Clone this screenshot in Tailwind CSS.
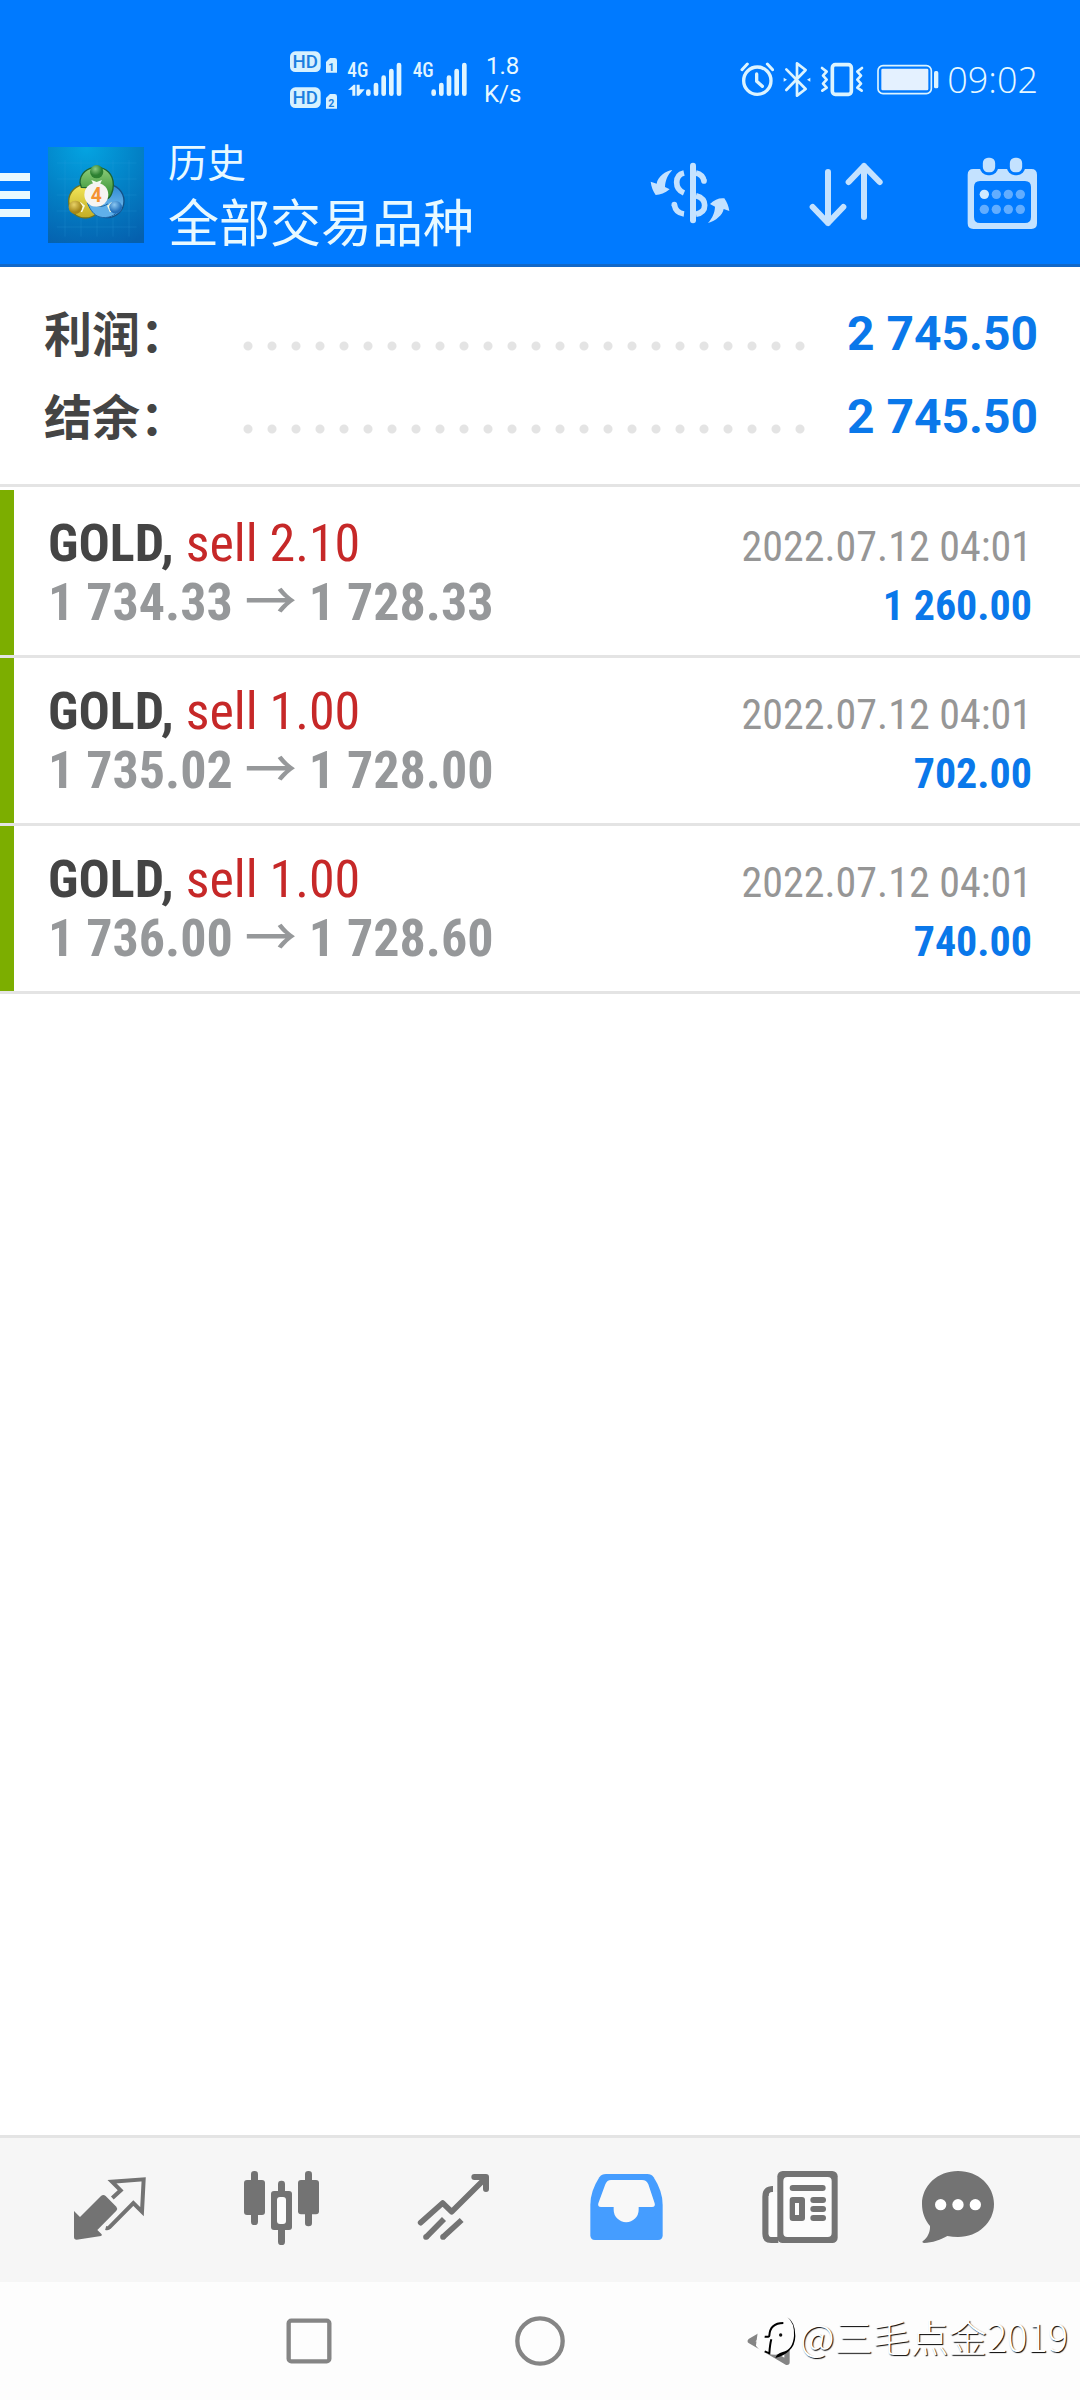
<!DOCTYPE html>
<html lang="zh-CN">
<head>
<meta charset="utf-8">
<meta name="viewport" content="width=device-width, initial-scale=1">
<title>历史 - 全部交易品种</title>
<script src="https://cdn.jsdelivr.net/npm/@tailwindcss/browser@4"></script>
</head>
<body class="flex min-h-screen flex-col bg-white font-['Roboto','Noto_Sans_CJK_SC',sans-serif]">

<header class="border-b-3 border-[#1268c8] bg-[#007aff] text-[#e8f9ff]">
  <!-- system status bar -->
  <div class="flex h-[126px] items-center justify-between pt-[34px] pr-[42px] pl-[288px]">
    <div class="flex items-center">
      <svg class="h-[60px] w-[50px]" viewBox="54 30 150 180" fill="#d6f1ff" role="img" aria-label="HD 1, HD 2">
        <rect x="60" y="34" width="92" height="62" rx="16"/>
        <rect x="60" y="142" width="92" height="62" rx="16"/>
        <path d="M168 66l12-12h14q7 0 7 7v37h-33z"/>
        <path d="M168 174l12-12h14q7 0 7 7v37h-33z"/>
        <g fill="#1b7fe0" font-family="Roboto, sans-serif" font-weight="500" text-anchor="middle">
          <text x="106" y="85" font-size="56">HD</text>
          <text x="106" y="193" font-size="56">HD</text>
          <text x="184" y="92" font-size="32" font-weight="700">1</text>
          <text x="184" y="200" font-size="32" font-weight="700">2</text>
        </g>
      </svg>
      <svg class="ml-2 h-[40px] w-[57px]" viewBox="231 60 171 120" fill="#e0f5ff" role="img" aria-label="4G">
        <text x="235" y="112" font-size="58" font-weight="500" font-family="Roboto Condensed, sans-serif">4G</text>
        <rect x="291" y="148" width="14" height="20" rx="7"/><rect x="314" y="128" width="14" height="40" rx="7"/><rect x="337" y="106" width="14" height="62" rx="7"/><rect x="360" y="86" width="14" height="82" rx="7"/><rect x="383" y="68" width="14" height="100" rx="7"/>
        <path d="M237 150l17-16h5v33h-9v-18zM263 134h9v14h15l-17 19h-7z"/>
      </svg>
      <svg class="ml-2 h-[40px] w-[57px]" viewBox="425 60 171 120" fill="#e0f5ff" role="img" aria-label="4G">
        <text x="430" y="112" font-size="58" font-weight="500" font-family="Roboto Condensed, sans-serif">4G</text>
        <rect x="486" y="148" width="14" height="20" rx="7"/><rect x="509" y="128" width="14" height="40" rx="7"/><rect x="532" y="106" width="14" height="62" rx="7"/><rect x="555" y="86" width="14" height="82" rx="7"/><rect x="578" y="68" width="14" height="100" rx="7"/>
      </svg>
      <div class="ml-4 text-center text-[24px] leading-7">1.8<br>K/s</div>
    </div>
    <div class="flex items-center">
      <svg class="h-[36px] w-[34px]" viewBox="61 66 102 108" fill="none" stroke="#dcf4ff" role="img" aria-label="闹钟">
        <circle cx="113" cy="122" r="41" stroke-width="10"/><path d="M111 102v22l17 15" stroke-width="10" stroke-linecap="round" stroke-linejoin="round"/><path d="M67 89l16-17M159 89l-16-17" stroke-width="9" stroke-linecap="round"/>
      </svg>
      <svg class="ml-[9px] h-[36px] w-[28px]" viewBox="190 66 84 108" fill="none" stroke="#dcf4ff" role="img" aria-label="蓝牙">
        <path d="M200 88l58 59-26 20V70l26 20-58 60" stroke-width="8" stroke-linecap="round" stroke-linejoin="round"/><path d="M192 113l10 6-10 6zM272 113l-10 6 10 6z" fill="#dcf4ff" stroke="none"/>
      </svg>
      <svg class="ml-[9px] h-[36px] w-[44px]" viewBox="300 66 132 108" fill="none" stroke="#dcf4ff" role="img" aria-label="振动">
        <rect x="337" y="74" width="57" height="89" rx="9" stroke-width="11"/>
        <path d="M306 84l14 11-11 12 11 12-11 12 11 12-13 9M426 84l-14 11 11 12-11 12 11 12-11 12 13 9" stroke-width="8" stroke-linecap="round" stroke-linejoin="round"/>
      </svg>
      <svg class="ml-[13px] h-[36px] w-[64px]" viewBox="474 66 192 108" role="img" aria-label="电池">
        <rect x="477" y="77" width="160" height="84" rx="15" fill="none" stroke="#dcf4ff" stroke-width="5"/><rect x="487" y="86" width="141" height="65" rx="4" fill="#e4f1ff"/><rect x="645" y="93" width="13" height="52" rx="5" fill="#dcf4ff"/>
      </svg>
      <time class="ml-1.5 font-['Open_Sans'] text-[36px] leading-10 font-light">09:02</time>
    </div>
  </div>

  <!-- toolbar -->
  <div class="flex h-[138px] items-center pr-[30px]">
    <button type="button" aria-label="菜单" class="flex w-[30px] flex-col gap-[10px]">
      <span class="h-2 bg-[#e8f9ff]"></span><span class="h-2 bg-[#e8f9ff]"></span><span class="h-2 bg-[#e8f9ff]"></span>
    </button>
    <svg class="ml-[18px] size-24" viewBox="144 51 288 288" role="img" aria-label="MetaTrader 4">
      <defs>
        <radialGradient id="sky" cx=".4" cy="0" r="1.1"><stop offset="0" stop-color="#04a4e2"/><stop offset=".5" stop-color="#0381c6"/><stop offset="1" stop-color="#0560ae"/></radialGradient>
        <linearGradient id="green" x1="0" y1="0" x2="0" y2="1"><stop offset="0" stop-color="#8fce7c"/><stop offset="1" stop-color="#2d8c2c"/></linearGradient>
        <linearGradient id="gold" x1="0" y1="0" x2="0" y2="1"><stop offset="0" stop-color="#f3e75a"/><stop offset="1" stop-color="#c2ac24"/></linearGradient>
        <linearGradient id="azure" x1="0" y1="0" x2="0" y2="1"><stop offset="0" stop-color="#2b86d2"/><stop offset="1" stop-color="#86cbf5"/></linearGradient>
        <radialGradient id="gball" cx=".4" cy=".3" r=".8"><stop offset="0" stop-color="#8ccb83"/><stop offset=".6" stop-color="#2c8031"/></radialGradient>
        <radialGradient id="yball" cx=".4" cy=".3" r=".8"><stop offset="0" stop-color="#e8d267"/><stop offset=".7" stop-color="#a58618"/></radialGradient>
        <radialGradient id="bball" cx=".4" cy=".3" r=".8"><stop offset="0" stop-color="#8cc8f2"/><stop offset=".7" stop-color="#2270bb"/></radialGradient>
      </defs>
      <rect x="144" y="51" width="288" height="288" fill="url(#sky)"/>
      <path d="M195 90v230M243 90v230M291 90v230M339 90v230M387 90v230M170 99h240M170 147h240M170 195h240M170 243h240M170 291h240" stroke="#35a5e2" stroke-opacity=".3" stroke-width="2"/>
      <circle cx="322" cy="213" r="50" fill="url(#azure)" stroke="#135187" stroke-width="4"/>
      <circle cx="256" cy="214" r="50" fill="url(#gold)" stroke="#6f7420" stroke-width="4"/>
      <path d="M240 158c0-28 22-46 50-46s50 20 50 52c0 20-9 40-18 42l-30-32-48-2z" fill="url(#green)" stroke="#1d6430" stroke-width="4"/>
      <path d="M262 218c18 12 46 16 60 4l32 22c-14 18-42 24-62 14-14-7-24-24-30-40z" fill="#5fb0ea" stroke="#1b66a8" stroke-width="3"/>
      <path d="M274 150l16 6 16-6-10 20h-12z" fill="#f2fbef"/>
      <path d="M240 218l12 10-8 18M336 218l-12 10 8 18" fill="none" stroke="#f7fae0" stroke-width="5"/>
      <circle cx="290" cy="125" r="20" fill="url(#gball)"/><circle cx="226" cy="232" r="20" fill="url(#yball)"/><circle cx="347" cy="232" r="19" fill="url(#bball)"/>
      <circle cx="289" cy="194" r="36" fill="#f5f4f2"/>
      <text x="289" y="215" text-anchor="middle" font-size="58" font-weight="700" fill="#f49232" font-family="Roboto, sans-serif">4</text>
    </svg>
    <div class="ml-6 flex-1 pt-1.5 whitespace-nowrap">
      <p class="text-[39px] leading-[54px]">历史</p>
      <h1 class="text-[51px] leading-[68px]">全部交易品种</h1>
    </div>
    <div class="flex gap-[60px]">
      <button type="button" aria-label="交易品种" class="size-24">
        <svg viewBox="66 21 288 288" fill="none" stroke="#c4e2ff" stroke-width="17">
          <path d="M219 77v164" stroke-linecap="round" stroke-width="18"/>
          <path d="M192 99q-22 5-22 28t22 32M163 194q4 25 29 28M228 99q20 4 24 24M228 167q26 7 26 29t-26 27" />
          <circle cx="163" cy="194" r="8.500" fill="#c4e2ff" stroke="none"/><circle cx="252" cy="123" r="8.500" fill="#c4e2ff" stroke="none"/>
          <path d="M157 90c-20 2-44 20-47 41l-18-6c2 16 7 28 15 40 14 0 28-5 42-17l-14-7c1-20 8-36 22-51zM264 249c24-7 44-24 47-42l17 6c-2-14-7-26-15-38-15-2-30 4-43 17l15 8c-1 20-8 34-21 49z" fill="#c4e2ff" stroke="none"/>
        </svg>
      </button>
      <button type="button" aria-label="排序" class="size-24">
        <svg viewBox="534 21 288 288" fill="none" stroke="#c4e2ff" stroke-width="18" stroke-linecap="round" stroke-linejoin="round"><path d="M624 96v153M578 201l46 48 46-48M732 231V78M686 126l46-48 47 48"/></svg>
      </button>
      <button type="button" aria-label="日历" class="size-24">
        <svg viewBox="1002 21 288 288" fill="#c4e2ff">
          <path fill-rule="evenodd" d="M1060 87h174q17 0 17 17v146q0 17-17 17h-174q-17 0-17-17V104q0-17 17-17zM1080 123q-18 0-18 18v90q0 18 18 18h135q18 0 18-18v-90q0-18-18-18z"/>
          <g stroke="#007aff" stroke-width="9"><rect x="1084" y="49" width="46" height="52" rx="20"/><rect x="1165" y="49" width="46" height="52" rx="20"/></g>
          <circle cx="1093" cy="163" r="14" fill="#cfe9ff"/>
          <g fill="#62adff"><circle cx="1129" cy="163" r="14"/><circle cx="1165" cy="163" r="14"/><circle cx="1201" cy="163" r="14"/><circle cx="1093" cy="208" r="14"/><circle cx="1129" cy="208" r="14"/><circle cx="1165" cy="208" r="14"/><circle cx="1201" cy="208" r="14"/></g>
        </svg>
      </button>
    </div>
  </div>
</header>

<main class="flex-1">
  <dl class="border-b-3 border-[#e4e4e4] pt-[25px] pr-[42px] pb-[26px] pl-11 text-[48px] font-bold">
    <div class="flex items-center">
      <dt class="w-48 pt-1 leading-[79px] text-[#444]">利润：</dt>
      <dd class="flex flex-1 items-center leading-[83px] text-[#0a78ea]">
        <span class="mt-6 h-6 flex-1 bg-[radial-gradient(circle,#e4e4e4_4px,transparent_5px)] bg-[length:24px_24px]"></span>
        <span class="w-[228px] text-right">2 745.50</span>
      </dd>
    </div>
    <div class="flex items-center">
      <dt class="w-48 pt-1 leading-[79px] text-[#444]">结余：</dt>
      <dd class="flex flex-1 items-center leading-[83px] text-[#0a78ea]">
        <span class="mt-6 h-6 flex-1 bg-[radial-gradient(circle,#e4e4e4_4px,transparent_5px)] bg-[length:24px_24px]"></span>
        <span class="w-[228px] text-right">2 745.50</span>
      </dd>
    </div>
  </dl>

  <ul class="mt-[3px] font-['Roboto_Condensed','Noto_Sans_CJK_SC',sans-serif]">
    <li class="border-b-3 border-[#e4e4e4]">
      <div class="flex items-baseline justify-between border-l-14 border-[#7cae00] pt-6 pr-12 pb-5 pl-[34px] leading-[59px]">
        <div class="text-[52px]">
          <p><b class="text-[#444]">GOLD,</b> <span class="text-[#c62828]">sell 2.10</span></p>
          <p class="font-bold text-[#96989a]">1 734.33 <span class="font-medium">→</span> 1 728.33</p>
        </div>
        <div class="text-right text-[42px]">
          <p class="text-[#969696]">2022.07.12 04:01</p>
          <p class="font-bold text-[#0a78ea]">1 260.00</p>
        </div>
      </div>
    </li>
    <li class="border-b-3 border-[#e4e4e4]">
      <div class="flex items-baseline justify-between border-l-14 border-[#7cae00] pt-6 pr-12 pb-5 pl-[34px] leading-[59px]">
        <div class="text-[52px]">
          <p><b class="text-[#444]">GOLD,</b> <span class="text-[#c62828]">sell 1.00</span></p>
          <p class="font-bold text-[#96989a]">1 735.02 <span class="font-medium">→</span> 1 728.00</p>
        </div>
        <div class="text-right text-[42px]">
          <p class="text-[#969696]">2022.07.12 04:01</p>
          <p class="font-bold text-[#0a78ea]">702.00</p>
        </div>
      </div>
    </li>
    <li class="border-b-3 border-[#e4e4e4]">
      <div class="flex items-baseline justify-between border-l-14 border-[#7cae00] pt-6 pr-12 pb-5 pl-[34px] leading-[59px]">
        <div class="text-[52px]">
          <p><b class="text-[#444]">GOLD,</b> <span class="text-[#c62828]">sell 1.00</span></p>
          <p class="font-bold text-[#96989a]">1 736.00 <span class="font-medium">→</span> 1 728.60</p>
        </div>
        <div class="text-right text-[42px]">
          <p class="text-[#969696]">2022.07.12 04:01</p>
          <p class="font-bold text-[#0a78ea]">740.00</p>
        </div>
      </div>
    </li>
  </ul>
</main>

<!-- section tabs -->
<nav class="grid h-[147px] grid-cols-6 items-center justify-items-center border-t-3 border-[#e4e4e4] bg-[#f6f6f6] px-6">
  <a href="#quotes" aria-label="行情"><svg class="size-24" viewBox="66 126 288 288" fill="#737373">
    <path d="M102 273l18 18 63-63q7-6 14 0l32 32q5 6 0 12l-57 58 13 13q2 4-2 5l-73 11q-8 0-8-8z"/>
    <path d="M217 234l25-23-26-26 95-7-5 97-26-26-72 73q-4 4-11 2" fill="none" stroke="#737373" stroke-width="12"/>
  </svg></a>
  <a href="#charts" aria-label="图表"><svg class="size-24" viewBox="582 126 288 288" fill="#737373">
    <rect x="633" y="153" width="21" height="162" rx="10"/><rect x="612" y="180" width="63" height="105" rx="9"/>
    <rect x="795" y="153" width="21" height="166" rx="10"/><rect x="774" y="180" width="63" height="103" rx="9"/>
    <rect x="714" y="182" width="21" height="50" rx="10"/><rect x="714" y="310" width="21" height="65" rx="10"/>
    <rect x="693" y="213" width="63" height="117" rx="9"/><rect x="711" y="231" width="27" height="81" rx="9" fill="#fcfcfc"/>
  </svg></a>
  <a href="#trade" aria-label="交易"><svg class="size-24" viewBox="1098 126 288 288" fill="none" stroke="#737373" stroke-width="17">
    <path d="M1142 308l66-59 27 26 102-101" stroke-linecap="round" stroke-linejoin="round"/><path d="M1303 171h35v36" stroke-linecap="round" stroke-linejoin="round" stroke-width="18"/>
    <path d="M1158 352l54-55M1208 352l57-52"/><circle cx="1158" cy="351" r="8.500" fill="#737373" stroke="none"/><circle cx="1209" cy="351" r="8.500" fill="#737373" stroke="none"/>
  </svg></a>
  <a href="#history" aria-label="历史" aria-current="page"><svg class="size-24" viewBox="114 126 288 288">
    <path fill="#459dff" d="M198 162h124q12 0 19 10 27 42 27 82v92q0 14-14 14H165q-14 0-14-14v-92q0-40 27-82 7-10 20-10z"/>
    <path fill="#f8f8f8" d="M213 180h93q14 0 19 13l19 57q3 11-8 11h-40v8a37 37 0 0 1-75 0v-8h-38q-11 0-8-11l21-57q5-13 17-13z"/>
  </svg></a>
  <a href="#news" aria-label="新闻"><svg class="size-24" viewBox="630 126 288 288" fill="#737373">
    <path d="M699 198v18q-13-2-13 12v113q0 10 13 10h16v18h-22q-26 0-26-28V230q0-32 32-32z"/><path d="M686 216h26v126q0 9-8 9h-9q-9 0-9-9z" fill="#fcfcfc"/><path d="M699 198v18q-13-2-13 12l-8 0v-20z"/>
    <rect x="712" y="153" width="181" height="216" rx="16"/><rect x="730" y="171" width="145" height="180" rx="12" fill="#fcfcfc"/>
    <rect x="749" y="195" width="108" height="18" rx="9"/><rect x="749" y="231" width="46" height="72" rx="9"/><rect x="765" y="249" width="12" height="36" fill="#fcfcfc"/>
    <rect x="811" y="231" width="47" height="18" rx="9"/><rect x="811" y="258" width="47" height="18" rx="9"/><rect x="811" y="285" width="47" height="18" rx="9"/>
  </svg></a>
  <a href="#messages" aria-label="消息"><svg class="size-24" viewBox="1146 126 288 288">
    <path fill="#737373" d="M1254 153c61 0 108 44 108 99s-47 99-108 99q-16 0-32-3c-18 10-46 21-70 21q-8-1-3-6c14-10 22-28 21-45-15-17-24-41-24-66 0-55 47-99 108-99z"/>
    <g fill="#fff"><circle cx="1202" cy="254" r="17"/><circle cx="1254" cy="254" r="17"/><circle cx="1306" cy="254" r="17"/></g>
  </svg></a>
</nav>

<!-- system navigation -->
<footer class="relative flex h-[118px] items-center justify-center gap-[183px] bg-[#fdfdfd]">
  <button type="button" aria-label="最近任务" class="size-12"><svg viewBox="0 0 144 144" fill="none" stroke="#858585" stroke-width="13"><rect x="11" y="11" width="122" height="122" rx="8"/></svg></button>
  <button type="button" aria-label="主屏幕" class="size-12"><svg class="overflow-visible" viewBox="0 0 144 144" fill="none" stroke="#858585" stroke-width="13"><circle cx="72" cy="72" r="68"/></svg></button>
  <button type="button" aria-label="返回" class="size-12"><svg viewBox="0 0 144 144" fill="none" stroke="#858585" stroke-width="16" stroke-linejoin="round"><path d="M120 8v128L10 72z"/></svg></button>
  <div class="absolute top-[30px] right-3 flex items-center whitespace-nowrap text-white">
    <svg class="mr-1 h-12 w-10 overflow-visible" viewBox="164 140 120 144" fill="none">
      <path d="M176 180q30-34 72-34 30 24 28 66 0 44-54 52-40 0-54-24z" fill="#fdfdfd" stroke="#fdfdfd" stroke-width="8"/>
      <path d="M190 214q14 2 14-3 2-38 42-38M210 222q-4 14-6 42l-14-6" stroke="#000" stroke-width="6"/>
      <path d="M258 156q22 16 20 56-4 42-34 48-18 4-22 18 26-6 40-20 20-18 20-46 0-42-24-56z" fill="#000"/>
      <circle cx="238" cy="209" r="5" fill="#111"/>
    </svg>
    <span class="font-['Noto_Sans_CJK_SC',sans-serif] text-[38px] leading-12 font-light [text-shadow:1px_1px_1px_#000]">@三毛点金2019</span>
  </div>
</footer>
</body>
</html>
